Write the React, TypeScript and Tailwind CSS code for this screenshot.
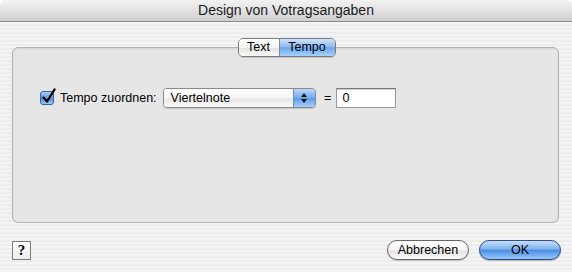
import React from "react";

const font = { fontFamily: '"Lucida Grande", "Liberation Sans", Arial, sans-serif' };

export default function App() {
  return (
    <div
      className="w-[572px] h-[272px] overflow-hidden flex flex-col rounded-t-[6px] bg-[repeating-linear-gradient(180deg,#ededed_0px,#ededed_2px,#f4f4f4_2px,#f4f4f4_4px)] text-black"
      style={font}
    >
      {/* Title bar */}
      <div className="h-[22px] shrink-0 flex items-center justify-center rounded-t-[6px] border-b border-[#8c8c8c] bg-[linear-gradient(180deg,#f2f2f2_0%,#e2e2e2_50%,#cdcdcd_100%)] text-[14px] text-[#1a1a1a]">
        Design von Votragsangaben
      </div>

      {/* Tabs */}
      <div className="relative z-10 mt-[16px] flex justify-center h-[19px] -mb-[10px] pl-[1px]">
        <div className="flex h-[19px] rounded-[5px] border border-[#7b7b7b] overflow-hidden shadow-[0_1px_1px_rgba(0,0,0,0.15)] text-[12.5px]">
          <div className="w-[41px] flex items-center justify-center bg-[linear-gradient(180deg,#ffffff_0%,#f4f4f4_50%,#e4e4e4_55%,#fbfbfb_100%)] border-r border-[#8a8a8a]">
            Text
          </div>
          <div className="w-[55px] flex items-center justify-center bg-[linear-gradient(180deg,#cfe3fb_0%,#8fbcf3_45%,#6aa6ef_52%,#a6d2fd_100%)]">
            Tempo
          </div>
        </div>
      </div>

      {/* Panel */}
      <div className="ml-[12px] mr-[13px] h-[176px] shrink-0 rounded-[6px] border border-[#b3b3b3] bg-[#e6e6e6] shadow-[inset_0_1px_2px_rgba(0,0,0,0.08)] pt-[40px] pl-[27px]">
        <div className="flex items-center h-[20px] text-[12.5px]">
          {/* checkbox */}
          <div className="w-[14px] h-[14px] rounded-[3px] border border-[#3a5f99] bg-[linear-gradient(180deg,#a9cdf8_0%,#5f9de9_50%,#4a8fe6_55%,#9ccdfb_100%)] relative">
            <svg width="16" height="16" viewBox="0 0 16 16" className="absolute -top-[4px] left-[0px]">
              <path d="M2.5 9.5 L6 13.5 L13.5 1.5" fill="none" stroke="#000" strokeWidth="2.3" strokeLinecap="round" strokeLinejoin="round" />
            </svg>
          </div>
          <span className="ml-[6px]">Tempo zuordnen:</span>
          {/* popup */}
          <div className="ml-[6px] w-[153px] h-[20px] flex rounded-[4px] border border-[#8a8a8a] overflow-hidden shadow-[0_1px_1px_rgba(0,0,0,0.15)]">
            <div className="flex-1 flex items-center pl-[7px] bg-[linear-gradient(180deg,#ffffff_0%,#f5f5f5_50%,#e7e7e7_55%,#fafafa_100%)]">
              Viertelnote
            </div>
            <div className="w-[22px] flex items-center justify-center border-l border-[#6d8fc0] bg-[linear-gradient(180deg,#bcd9fb_0%,#76abef_48%,#5c9be9_52%,#a4d0fc_100%)]">
              <svg width="8" height="12" viewBox="0 0 8 12">
                <path d="M4 1 L7 5 L1 5 Z" fill="#111" />
                <path d="M4 11 L7 7 L1 7 Z" fill="#111" />
              </svg>
            </div>
          </div>
          <span className="ml-[6px] w-[12px] text-center">=</span>
          <div className="ml-[2px] w-[60px] h-[20px] flex items-center pl-[6px] bg-white border border-[#9a9a9a] border-t-[#7a7a7a] shadow-[inset_0_1px_1px_rgba(0,0,0,0.2)]">
            0
          </div>
        </div>
      </div>

      {/* Bottom row */}
      <div className="mt-[17px] flex items-center h-[20px] pl-[12px] pr-[11px]">
        <div className="w-[19px] h-[19px] flex items-center justify-center border border-[#7d7d7d] bg-[linear-gradient(180deg,#ffffff_0%,#ededed_100%)] text-[15px] font-bold leading-none" style={{ fontFamily: '"Liberation Serif", serif' }}>
          ?
        </div>
        <div className="flex-1" />
        <div className="w-[82px] h-[20px] flex items-center justify-center rounded-full border border-[#666] bg-[linear-gradient(180deg,#ffffff_0%,#f3f3f3_50%,#e2e2e2_55%,#fbfbfb_100%)] text-[12.5px] shadow-[0_1px_1px_rgba(0,0,0,0.2)]">
          Abbrechen
        </div>
        <div className="ml-[10px] w-[82px] h-[20px] flex items-center justify-center rounded-full border border-[#2e4f86] bg-[linear-gradient(180deg,#c6def9_0%,#7fb2ef_45%,#4f90e3_52%,#93c7fb_100%)] text-[12.5px] shadow-[0_1px_1px_rgba(0,0,0,0.25)]">
          OK
        </div>
      </div>
    </div>
  );
}
